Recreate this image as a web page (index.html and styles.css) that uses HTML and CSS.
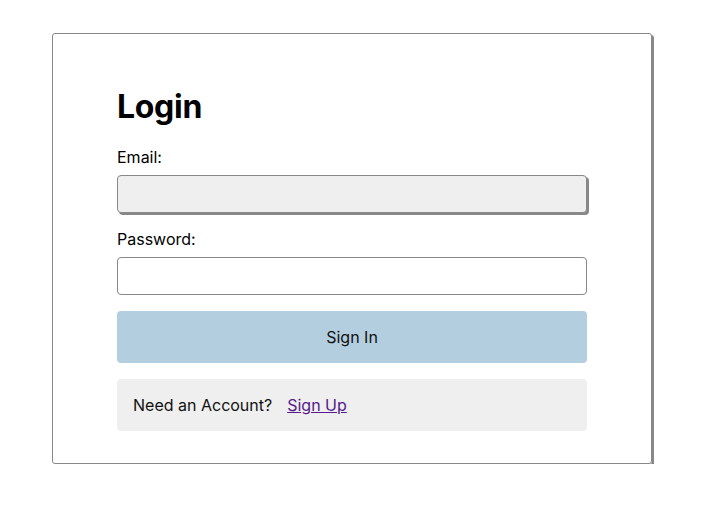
FILE: index.html
```html
<!DOCTYPE html>
<html>
<head>
<meta charset="utf-8">
<link rel="stylesheet" href="styles.css">
</head>
<body>
<div class="page">
  <div class="card">
    <h1 class="title">Login</h1>
    <form class="form">
      <label class="label" for="email">Email:</label>
      <input class="input input-focus" id="email" type="email">
      <label class="label" for="password">Password:</label>
      <input class="input" id="password" type="password">
      <button class="btn" type="button">Sign In</button>
    </form>
    <div class="alt">
      <span>Need an Account?</span>
      <a class="alt-link" href="#">Sign Up</a>
    </div>
  </div>
</div>
</body>
</html>
```
FILE: styles.css
```css
html, body {
  margin: 0;
  padding: 0;
  background: #fff;
}
body {
  font-family: Inter, "Noto Sans", sans-serif;
  color: #000;
}
.page {
  padding: 33px 0 0 52px;
}
.card {
  box-sizing: border-box;
  width: 600px;
  border: 1px solid #888;
  border-radius: 3px;
  box-shadow: 2px 2px 0 #888;
  padding: 32px 64px;
}
.title {
  font-size: 32px;
  font-weight: 700;
  letter-spacing: -0.3px;
  margin: 21px 0 22px;
}
.form {
  display: flex;
  flex-direction: column;
}
.label {
  font-size: 16px;
  line-height: 19px;
  margin-bottom: 8px;
}
.input {
  box-sizing: border-box;
  height: 38px;
  border: 1px solid #888;
  border-radius: 4px;
  background: #fff;
  margin: 0 0 16px;
  font: inherit;
  outline: none;
}
.input-focus {
  background: #efefef;
  box-shadow: 2px 2px 0 #888;
  margin-bottom: 17px;
}
.btn {
  height: 52px;
  border: none;
  border-radius: 4px;
  background: #b3cfdf;
  font: inherit;
  font-size: 16px;
  color: #111;
  margin: 0 0 16px;
}
.alt {
  background: #efefef;
  border-radius: 4px;
  height: 52px;
  display: flex;
  align-items: center;
  padding: 0 16px;
  font-size: 16px;
  gap: 15px;
  color: #111;
}
.alt-link {
  color: #551a8b;
}
```
